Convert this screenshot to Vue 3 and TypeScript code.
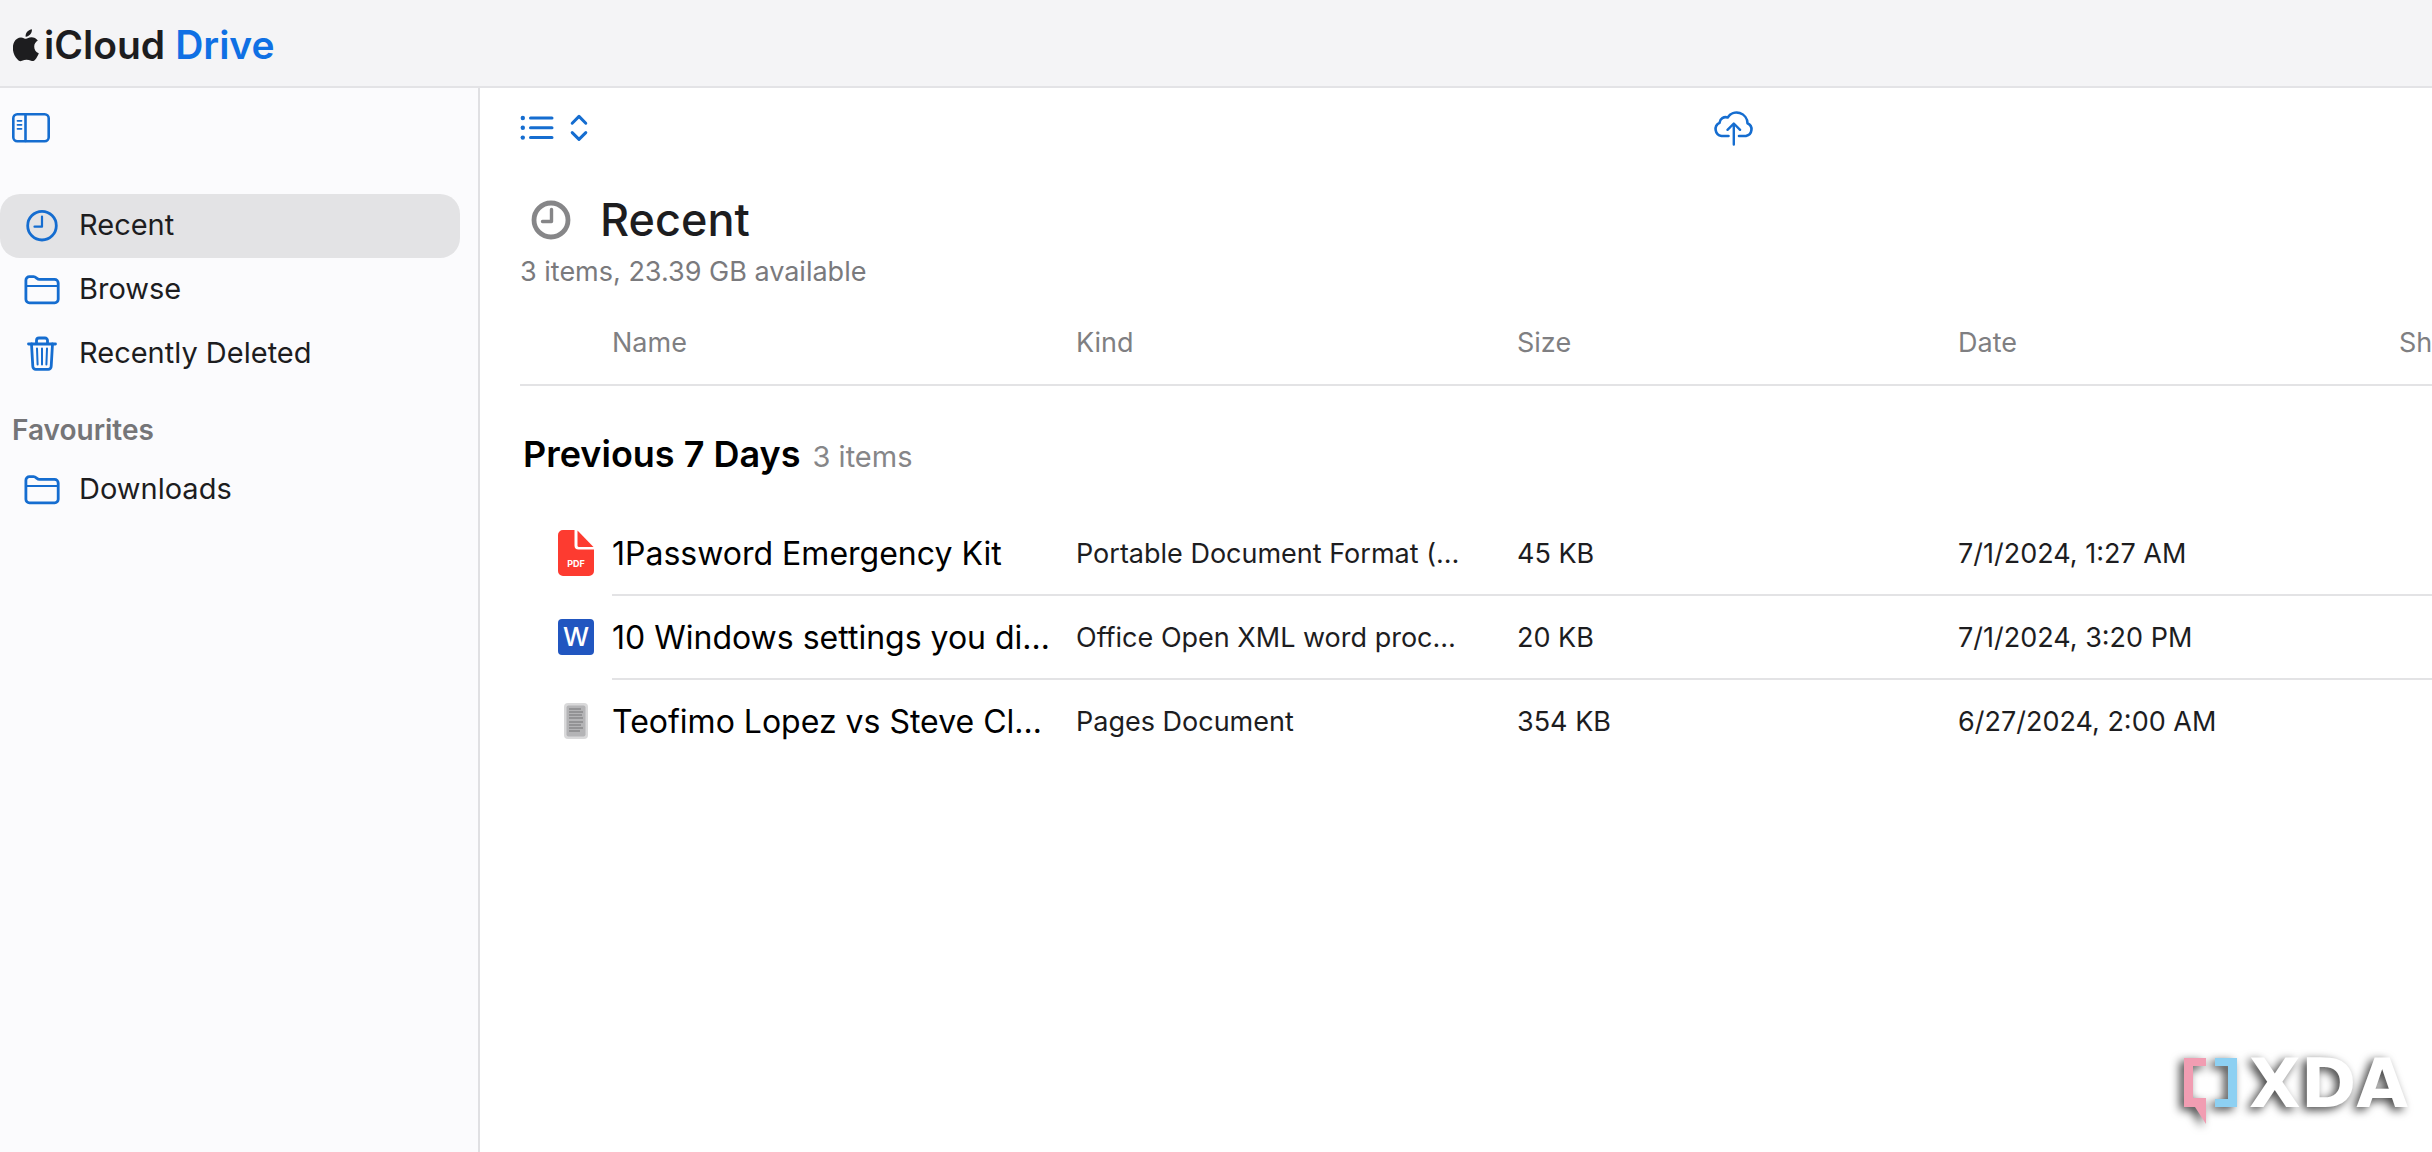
<script setup lang="ts">
type IconName = 'clock' | 'folder' | 'trash'
type FileType = 'pdf' | 'word' | 'pages'

interface NavItem {
  label: string
  icon: IconName
  active?: boolean
}

interface DriveFile {
  name: string
  kind: string
  size: string
  date: string
  type: FileType
}

const navItems: NavItem[] = [
  { label: 'Recent', icon: 'clock', active: true },
  { label: 'Browse', icon: 'folder' },
  { label: 'Recently Deleted', icon: 'trash' },
]

const favourites: NavItem[] = [{ label: 'Downloads', icon: 'folder' }]

const sections = [
  { title: '', items: navItems },
  { title: 'Favourites', items: favourites },
]

const columns: string[] = ['Name', 'Kind', 'Size', 'Date', 'Shared By']

const files: DriveFile[] = [
  { name: '1Password Emergency Kit', kind: 'Portable Document Format (…', size: '45 KB', date: '7/1/2024, 1:27 AM', type: 'pdf' },
  { name: '10 Windows settings you di…', kind: 'Office Open XML word proc…', size: '20 KB', date: '7/1/2024, 3:20 PM', type: 'word' },
  { name: 'Teofimo Lopez vs Steve Cl…', kind: 'Pages Document', size: '354 KB', date: '6/27/2024, 2:00 AM', type: 'pages' },
]
</script>

<template>
  <div class="app">
    <header class="topbar">
      <a class="brand" href="#">
        <svg class="apple" viewBox="0 0 26 33" aria-hidden="true">
          <path d="M18.900 0.300c.2 2-.6 3.900-1.800 5.300-1.200 1.400-3 2.300-4.500 2.100-.2-1.900.7-3.900 1.800-5.100C15.600 1.300 17.500.4 18.900.3z" />
          <path d="M13 9.800c1.200 0 3-1.500 5.400-1.500 2.500 0 5 1.200 6.400 3.300-5.300 3.100-4.500 10.500 1 12.700-.8 2.300-2.100 4.500-3.500 6.300-1.300 1.600-2.600 1.800-4.200 1.200-3.300-1.400-5.900-1.400-9.100 0-1.700.7-3 .4-4.400-1.300C-.3 25.500-1.400 18 1.200 13 2.700 10 5.300 8.400 8 8.400c2.100 0 3.700 1.400 5 1.400z" />
        </svg>
        <span>iCloud</span>
        <span class="product">Drive</span>
      </a>
    </header>

    <div class="body">
      <aside class="sidebar">
        <div class="sidebar-tools">
          <button type="button" class="icon-button" aria-label="Toggle sidebar">
            <svg class="panel-icon" viewBox="0 0 38 30" aria-hidden="true">
              <rect x="1.300" y="1.300" width="35.400" height="27" rx="4" />
              <path d="M13.500 1v27" />
              <path class="thin" d="M5.500 7.800h4M5.500 11.800h4M5.500 15.800h4" />
            </svg>
          </button>
        </div>

        <nav v-for="section in sections" :key="section.title" :aria-label="section.title || 'Library'">
          <h2 v-if="section.title" class="section-title">{{ section.title }}</h2>
          <ul>
            <li v-for="item in section.items" :key="item.label">
              <a href="#" class="nav-item" :class="{ active: item.active }">
                <svg class="nav-icon" viewBox="0 0 36 36" aria-hidden="true">
                  <template v-if="item.icon === 'clock'">
                    <circle cx="18" cy="17.700" r="14.300" />
                    <path d="M18 8.500v10.200h-7.500" stroke-width="2.200" />
                  </template>
                  <template v-else-if="item.icon === 'folder'">
                    <path d="M1.900 8.200a3.500 3.500 0 0 1 3.500-3.500h4.200c2.600 0 3.300 2.700 5.800 2.700h15.100a3.700 3.700 0 0 1 3.700 3.700v16.200a3.500 3.500 0 0 1-3.500 3.500H5.400a3.500 3.500 0 0 1-3.500-3.500z" />
                    <path d="M2 14h32" stroke-width="2.200" />
                  </template>
                  <template v-else>
                    <path d="M4.500 8h27" />
                    <path d="M12.500 7.500V4.500A2.500 2.500 0 0 1 15 2h6a2.500 2.500 0 0 1 2.500 2.500v3M7.500 8l1.300 22.300a3 3 0 0 0 3 3h12.400a3 3 0 0 0 3-3L28.500 8" />
                    <path d="M13 12.500l.6 16M18 12.500v16M23 12.500l-.6 16" stroke-width="2" />
                  </template>
                </svg>
                <span class="nav-label">{{ item.label }}</span>
              </a>
            </li>
          </ul>
        </nav>
      </aside>

      <main class="content">
        <div class="toolbar">
          <button type="button" class="icon-button view-button" aria-label="View options">
            <svg class="list-icon" viewBox="0 0 34 26" aria-hidden="true">
              <path d="M10.500 3h21.500M10.500 12.800h21.500M10.500 22.600h21.500" />
              <g class="dots">
                <circle cx="2.800" cy="3" r="2.200" />
                <circle cx="2.800" cy="12.800" r="2.200" />
                <circle cx="2.800" cy="22.600" r="2.200" />
              </g>
            </svg>
            <svg class="chevrons" viewBox="0 0 18 28" aria-hidden="true">
              <path d="M2.200 9.200L9 2.400l6.800 6.800M2.200 18.600L9 25.400l6.800-6.800" />
            </svg>
          </button>
          <button type="button" class="icon-button" aria-label="Upload">
            <svg class="cloud-icon" viewBox="0 0 42 36" aria-hidden="true">
              <path d="M15.500 26H8.500A7 7 0 0 1 6.500 12.800a6.200 6.200 0 0 1 8.200-5.300A10.800 10.800 0 0 1 34.500 13.300a6.700 6.700 0 0 1-1.500 12.700h-7" />
              <path d="M20.800 34.500V14M14.500 19.800l6.300-6.300 6.300 6.300" stroke-width="2.400" />
            </svg>
          </button>
        </div>

        <div class="heading">
          <svg class="heading-icon" viewBox="0 0 40 40" aria-hidden="true">
            <circle cx="20" cy="20" r="17" stroke-width="4.800" />
            <path d="M20.500 9.500v12h-9" stroke-width="3.400" />
          </svg>
          <h1>Recent</h1>
        </div>
        <p class="summary">3 items, 23.39 GB available</p>

        <table class="files">
          <colgroup>
            <col class="col-icon" />
            <col class="col-name" />
            <col v-for="n in 4" :key="n" class="col-data" />
          </colgroup>
          <thead>
            <tr>
              <td></td>
              <th v-for="column in columns" :key="column" scope="col">{{ column }}</th>
            </tr>
          </thead>
          <tbody>
            <tr class="group">
              <th colspan="6" scope="rowgroup">Previous 7 Days<span class="count">3 items</span></th>
            </tr>
            <tr v-for="file in files" :key="file.name" class="file">
              <td class="icon-cell">
                <svg v-if="file.type === 'pdf'" class="file-icon" viewBox="0 0 36 46" role="img" aria-label="PDF">
                  <path d="M5 0H16.500v15.500a4 4 0 0 0 4 4H36V41a5 5 0 0 1-5 5H5a5 5 0 0 1-5-5V5a5 5 0 0 1 5-5z" fill="#fd3b30" />
                  <path d="M19.500 0.500L35.500 17H21a1.500 1.500 0 0 1-1.500-1.500z" fill="#fd3b30" />
                  <text x="18" y="37" text-anchor="middle" font-size="9" font-weight="700" fill="#fff">PDF</text>
                </svg>
                <svg v-else-if="file.type === 'word'" class="file-icon" viewBox="0 0 36 46" role="img" aria-label="Word">
                  <rect y="5" width="36" height="36" rx="4" fill="#2156c0" />
                  <text x="18" y="32" text-anchor="middle" font-size="26" font-weight="500" fill="#fff">W</text>
                </svg>
                <svg v-else class="file-icon" viewBox="0 0 36 46" role="img" aria-label="Pages">
                  <rect x="6" y="5" width="24" height="36" rx="4" fill="#d9d9da" />
                  <rect x="8.500" y="7.500" width="19" height="31" rx="2" fill="#b4b4b6" />
                  <path d="M11 11h12M11 14h14M11 17h13M11 20h14M11 24h14M11 27h12M11 30h14M11 33h11" stroke="#88888b" stroke-width="1.400" />
                </svg>
              </td>
              <td class="name">{{ file.name }}</td>
              <td>{{ file.kind }}</td>
              <td>{{ file.size }}</td>
              <td>{{ file.date }}</td>
              <td></td>
            </tr>
          </tbody>
        </table>
      </main>
    </div>

    <svg class="watermark" viewBox="0 0 260 100" role="img" aria-label="XDA">
      <path d="M12 18h22v8H21v32h13v26L23 67H12z" fill="#f19db2" />
      <path d="M43 18h22v49H43v-8h13V26H43z" fill="#8dd0f2" />
      <text x="77" y="67">XDA</text>
    </svg>
  </div>
</template>

<style>
body {
  margin: 0;
  background: #fff;
}
</style>

<style scoped>
.app {
  position: relative;
  display: flex;
  flex-direction: column;
  min-height: 100vh;
  overflow: hidden;
  font-family: Inter, "Liberation Sans", sans-serif;
  color: #1d1d1f;
}

a {
  color: inherit;
  text-decoration: none;
}

svg {
  display: block;
  flex: none;
}

.topbar {
  box-sizing: border-box;
  display: flex;
  align-items: center;
  height: 88px;
  padding: 4px 13px 0;
  background: #f4f4f6;
  border-bottom: 2px solid #e3e3e6;
}

.brand {
  display: flex;
  align-items: center;
  font-size: 39px;
  font-weight: 600;
  line-height: 48px;
}

.apple {
  width: 26px;
  height: 33px;
  margin-right: 5px;
  fill: #1d1d1f;
}

.product {
  margin-left: 10px;
  color: #0f70e4;
}

.body {
  display: flex;
  flex: 1;
}

.sidebar {
  box-sizing: border-box;
  flex: none;
  width: 480px;
  padding-right: 18px;
  background: #fbfbfd;
  border-right: 2px solid #e0e0e3;
}

.sidebar-tools {
  display: flex;
  align-items: center;
  height: 80px;
  margin-bottom: 26px;
  padding-left: 12px;
}

.icon-button {
  display: flex;
  align-items: center;
  padding: 0;
  border: 0;
  background: none;
}

.icon-button svg {
  fill: none;
  stroke: #156dd0;
  stroke-width: 3;
  stroke-linecap: round;
  stroke-linejoin: round;
}

.icon-button .panel-icon {
  width: 38px;
  height: 30px;
  stroke-width: 2.600;
}

.panel-icon .thin {
  stroke-width: 1.800;
}

ul {
  margin: 0;
  padding: 0;
  list-style: none;
}

.nav-item {
  display: flex;
  align-items: center;
  gap: 19px;
  height: 64px;
  padding-left: 24px;
  border-radius: 20px;
  font-size: 29px;
  line-height: 36px;
}

.nav-item.active {
  background: #e3e3e5;
}

.nav-icon {
  width: 36px;
  height: 36px;
  fill: none;
  stroke: #156dd0;
  stroke-width: 2.800;
  stroke-linecap: round;
  stroke-linejoin: round;
}

.nav-label {
  padding-bottom: 2px;
}

.section-title {
  margin: 0;
  padding: 26px 0 10px 12px;
  font-size: 28px;
  font-weight: 600;
  line-height: 36px;
  color: #757578;
}

.content {
  flex: 1;
  min-width: 0;
  padding-left: 40px;
  overflow: hidden;
}

.toolbar {
  display: grid;
  grid-template-columns: 5fr 3fr;
  align-items: center;
  justify-items: start;
  height: 80px;
  padding-right: 4px;
}

.view-button {
  gap: 16px;
}

.list-icon {
  width: 34px;
  height: 26px;
}

.list-icon .dots {
  fill: #156dd0;
  stroke: none;
}

.chevrons {
  width: 18px;
  height: 28px;
}

.icon-button .cloud-icon {
  width: 42px;
  height: 36px;
  stroke-width: 2.600;
}

.heading {
  display: flex;
  align-items: center;
  gap: 29px;
  height: 56px;
  margin-top: 24px;
  padding-left: 11px;
}

.heading-icon {
  width: 40px;
  height: 40px;
  fill: none;
  stroke: #868688;
  stroke-linecap: round;
  stroke-linejoin: round;
}

h1 {
  margin: 0;
  font-size: 45px;
  font-weight: 500;
  line-height: 56px;
}

.summary {
  margin: 0;
  font-size: 27px;
  line-height: 48px;
  color: #7a7a7d;
}

.files {
  width: 2320px;
  table-layout: fixed;
  border-collapse: separate;
  border-spacing: 0;
  font-size: 27px;
  line-height: 36px;
}

.col-icon {
  width: 92px;
}

.col-name {
  width: 464px;
}

.col-data {
  width: 441px;
}

.files th,
.files td {
  box-sizing: border-box;
  padding: 0;
  text-align: left;
  vertical-align: middle;
  white-space: nowrap;
}

.files thead th,
.files thead td {
  height: 90px;
  padding-top: 6px;
  border-bottom: 2px solid #e3e3e5;
  font-weight: 400;
  color: #7f7f82;
}

.files .group th {
  height: 126px;
  padding: 12px 0 0 3px;
  font-size: 36px;
  font-weight: 600;
  color: #000;
}

.files .group .count {
  margin-left: 12px;
  font-size: 29px;
  font-weight: 400;
  color: #868688;
}

.files .file td {
  height: 84px;
  padding-top: 2px;
  border-bottom: 2px solid #e3e3e5;
}

.files .file .icon-cell {
  padding: 0 0 0 38px;
  border-bottom-color: transparent;
}

.files .file:last-child td {
  border-bottom-color: transparent;
}

.files .file .name {
  font-size: 32px;
  color: #000;
}

.file-icon {
  width: 36px;
  height: 46px;
}

.watermark {
  position: absolute;
  right: 0;
  bottom: 12px;
  width: 260px;
  height: 100px;
  overflow: visible;
  filter: drop-shadow(-4px 3px 5px rgba(0, 0, 0, 0.75));
}

.watermark text {
  font-family: "DejaVu Sans", sans-serif;
  font-size: 67px;
  font-weight: 700;
  fill: #fff;
}
</style>
